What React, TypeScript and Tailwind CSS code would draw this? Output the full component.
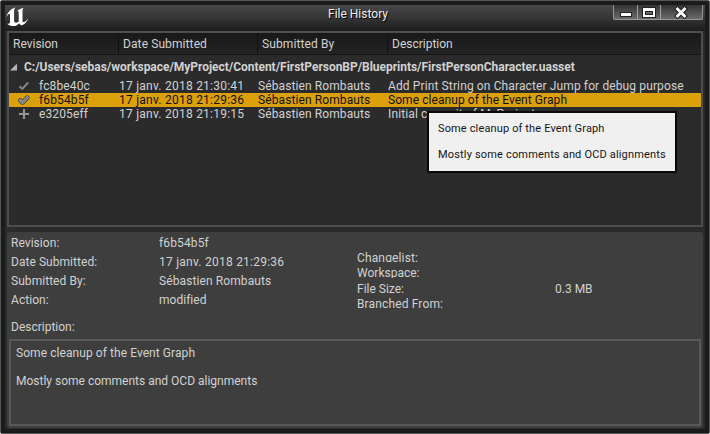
import type { ReactNode } from "react";

type Revision = {
  id: string;
  date: string;
  author: string;
  description: string;
  icon: ReactNode;
  selected?: boolean;
};

const CheckIcon = () => (
  <svg width="12" height="12" viewBox="0 0 12 12" fill="none">
    <path d="M1.5 6.300 4.300 9 10.200 2.500" stroke="#858585" strokeWidth="1.900" />
  </svg>
);

const DoubleCheckIcon = () => (
  <svg width="12" height="12" viewBox="0 0 12 12" fill="none" strokeLinecap="round" strokeLinejoin="round">
    <path d="M2.400 6.500 4.500 8.600 9.300 3.600" stroke="#4a4a46" strokeWidth="4.600" />
    <path d="M2.400 6.500 4.500 8.600 9.300 3.600" stroke="#a09e96" strokeWidth="2.800" />
    <path d="M2.700 6.700 4.500 8.500 9.100 3.900" stroke="#66666a" strokeWidth="1" />
  </svg>
);

const PlusIcon = () => (
  <svg width="12" height="12" viewBox="0 0 12 12" fill="none">
    <path d="M6 1v10M1 6h10" stroke="#959595" strokeWidth="2" />
  </svg>
);

const EngineLogo = () => (
  <svg width="23" height="20" viewBox="0 0 23 20" fill="#fff">
    <path d="M0.3 10.5C1.2 5.500 4.800 1.300 9.800 0.400C8.300 1.500 8.100 2.400 8.100 3.800V13.500C8.100 15 9 15.700 10 15.700C11.200 15.700 12.100 15.100 12.700 14.500V5.500C12.700 4.400 12 3.900 11.200 4C13 2.400 15.400 1.300 17.600 0.800C16.900 1.600 16.500 2.500 16.500 3.900V13.600C16.500 14.700 17.100 15.400 18.100 15.100C19.400 14.600 20.900 13.200 22.200 11.300C21.200 15 18.300 17.800 15.300 18.600L13 16.400C11.700 18.100 9.800 19 7.800 19C5.100 19 2.600 18.200 1.300 16.700C2.900 17 4 16.300 4 14.700V8C4 6.900 3.500 6.500 2.800 6.900C1.900 7.400 1.100 8.700 0.300 10.500Z" />
  </svg>
);

const revisions: Revision[] = [
  { id: "fc8be40c", date: "17 janv. 2018 21:30:41", author: "Sébastien Rombauts", description: "Add Print String on Character Jump for debug purpose", icon: <CheckIcon /> },
  { id: "f6b54b5f", date: "17 janv. 2018 21:29:36", author: "Sébastien Rombauts", description: "Some cleanup of the Event Graph", icon: <DoubleCheckIcon />, selected: true },
  { id: "e3205eff", date: "17 janv. 2018 21:19:15", author: "Sébastien Rombauts", description: "Initial commit of MyProject", icon: <PlusIcon /> },
];

const details = [
  { label: "Revision:", value: "f6b54b5f", tracking: "tracking-[0.13px]" },
  { label: "Date Submitted:", value: "17 janv. 2018 21:29:36", tracking: "tracking-[0.24px]" },
  { label: "Submitted By:", value: "Sébastien Rombauts", tracking: "tracking-[0.1px]" },
  { label: "Action:", value: "modified", tracking: "tracking-[0.03px]" },
];

function TitleBar() {
  return (
    <header className="flex h-[26px] shrink-0 bg-linear-to-b from-[#494949] via-[#353535] via-50% to-[#1c1c1c]">
      <div className="w-[181px] pt-[2px] pl-px">
        <EngineLogo />
      </div>
      <h1 className="flex-1 pt-[2px] text-center text-[12px] leading-[14px] text-[#f0f0f0] [text-shadow:1px_1px_0_#000]">
        File History
      </h1>
      <div className="flex h-[15px] w-[175px] justify-end pr-[2px]">
        <div className="flex h-[15px] rounded-b-[2px] border border-t-0 border-[#969696] bg-linear-to-b from-[#343434] to-[#6b6b6b]">
          <button className="flex w-6 items-center justify-center border-r border-[#a0a0a0]">
            <svg width="14" height="14" viewBox="0 0 14 14">
              <path d="M1 7h12v5H1z" fill="#222" />
              <path d="M2 8h10v3H2z" fill="#fff" />
            </svg>
          </button>
          <button className="flex w-[23px] items-center justify-center border-r border-[#a0a0a0]">
            <svg width="14" height="14" viewBox="0 0 14 14">
              <path d="M0 2h14v11H0z" fill="#222" />
              <path d="M1 3h12v9H1zM3 6v4h8V6z" fill="#fff" fillRule="evenodd" />
              <path d="M4 7h6v2H4z" fill="#666" />
            </svg>
          </button>
          <button className="flex w-[41px] items-center justify-center pr-[2px]">
            <svg width="14" height="14" viewBox="0 0 14 14" fill="none">
              <path d="m3.500 4 7 7M10.500 4l-7 7" stroke="#222" strokeWidth="5" strokeLinecap="square" />
              <path d="m3.500 4 7 7M10.500 4l-7 7" stroke="#fff" strokeWidth="2.800" strokeLinecap="square" />
            </svg>
          </button>
        </div>
      </div>
    </header>
  );
}

function HistoryList() {
  return (
    <section className="h-[196px] shrink-0 border-2 border-[#4e4e4e] bg-[#2b2b2b]">
      <div className="flex h-[22px] border-b border-[#151515] bg-linear-to-b from-[#191919] to-[#232323] leading-[14px]">
        <div className="w-[110px] border-r border-[#111] pt-[4px] pl-[4px]">Revision</div>
        <div className="w-[139px] border-r border-[#111] pt-[4px] pl-[4px] tracking-[0.1px]">Date Submitted</div>
        <div className="w-[130px] border-r border-[#111] pt-[4px] pl-[4px] tracking-[0.1px]">Submitted By</div>
        <div className="pt-[4px] pl-[4px]">Description</div>
      </div>
      <div className="flex h-6 items-center pt-[1px] pb-[2px]">
        <svg width="15" height="10" viewBox="0 0 15 10">
          <path d="M1 8.500 8 1.500v7z" fill="#b4b4b4" />
        </svg>
        <span className="font-bold tracking-[-0.03px] whitespace-nowrap">
          C:/Users/sebas/workspace/MyProject/Content/FirstPersonBP/Blueprints/FirstPersonCharacter.uasset
        </span>
      </div>
      {revisions.map((r) => (
        <div
          key={r.id}
          className={`flex h-[14px] leading-[14px] whitespace-nowrap ${r.selected ? "bg-[#dca00b] text-[#111]" : ""}`}
        >
          <div className="w-[30px] pt-px pl-[9px]">{r.icon}</div>
          <div className="w-[80px] tracking-[0.13px]">{r.id}</div>
          <div className="w-[139px] tracking-[0.24px]">{r.date}</div>
          <div className="w-[130px] tracking-[0.1px]">{r.author}</div>
          <div className={r.selected ? "tracking-[0.07px]" : "tracking-[0.12px]"}>{r.description}</div>
        </div>
      ))}
    </section>
  );
}

function Details() {
  return (
    <section className="mt-[5px] flex h-[196px] shrink-0 flex-col rounded-[3px] bg-[#3e3e3e] px-[2px] pb-[2px]">
      <div className="flex h-[84px] leading-[14px]">
        <div className="flex flex-col gap-[5px] pt-[4px] pl-[2px]">
          {details.map(({ label, value, tracking }) => (
            <div key={label} className="flex h-[14px]">
              <span className="w-[148px] tracking-[0.05px]">{label}</span>
              <span className={`w-[198px] ${tracking}`}>{value}</span>
            </div>
          ))}
        </div>
        <div className="flex flex-col pt-[19px]">
          <div className="h-[11px] overflow-hidden tracking-[0.14px]">Changelist:</div>
          <div className="mt-[4px] h-[12px] overflow-hidden">Workspace:</div>
          <div className="mt-[4px] flex h-[15px]">
            <span className="w-[198px]">File Size:</span>
            <span>0.3 MB</span>
          </div>
          <div className="h-[14px] tracking-[0.14px]">Branched From:</div>
        </div>
      </div>
      <div className="mt-[4px] pl-[2px] leading-[14px]">Description:</div>
      <div className="mt-[5px] flex-1 border-2 border-[#595959] px-[5px] pt-[5px] leading-[14px]">
        <p className="tracking-[0.07px]">Some cleanup of the Event Graph</p>
        <p className="mt-[14px]">Mostly some comments and OCD alignments</p>
      </div>
    </section>
  );
}

export default function App() {
  return (
    <div className="relative h-[434px] w-[710px] overflow-hidden rounded-[2px] border border-[#565858] bg-[#1a1b1b] px-1 pt-[4px] font-['Roboto','Liberation_Sans',sans-serif] text-[12px] text-[#d2d2d2]">
      <TitleBar />
      <main className="h-[398px] bg-[#2b2b2b] px-[2px]">
        <HistoryList />
        <Details />
      </main>
      <div
        role="tooltip"
        className="absolute top-[110px] left-[426px] h-[62px] w-[250px] border-2 border-[#080808] bg-[#f0f0f0] pt-[9px] pl-[9px] text-[11px] leading-[13px] whitespace-nowrap text-[#151515]"
      >
        <p className="tracking-[0.14px]">Some cleanup of the Event Graph</p>
        <p className="mt-[13px] tracking-[0.17px]">Mostly some comments and OCD alignments</p>
      </div>
    </div>
  );
}
